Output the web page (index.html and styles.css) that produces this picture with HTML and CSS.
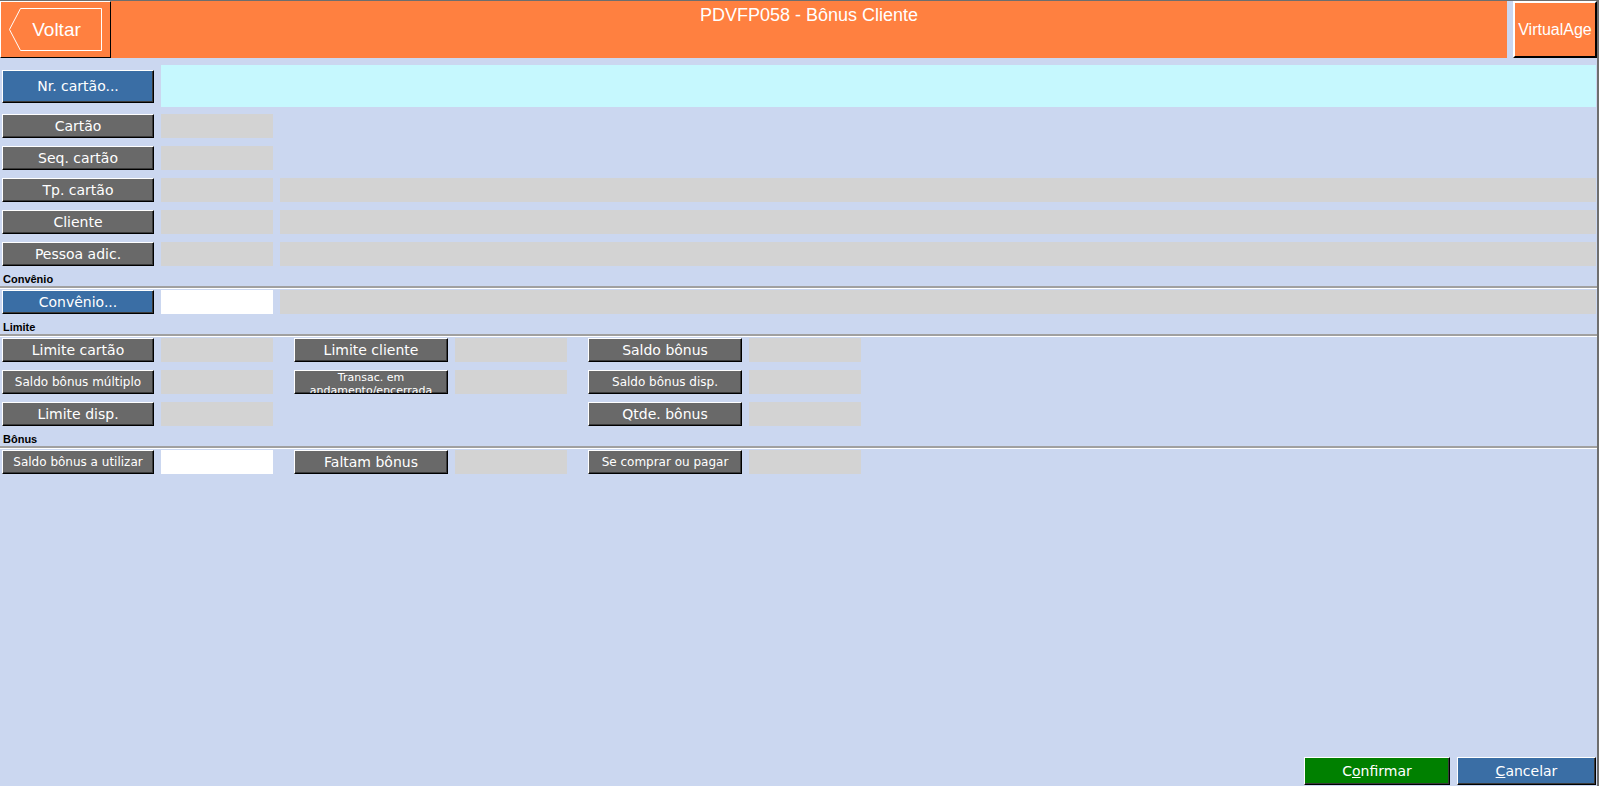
FILE: index.html
```html
<!DOCTYPE html>
<html lang="pt-BR">
  <head>
    <meta charset="UTF-8" />
    <meta name="viewport" content="width=device-width, initial-scale=1.0" />
    <title>PDVFP058 - Bônus Cliente</title>
    <link rel="stylesheet" href="styles.css">
  </head>
  <body>
    <div class="window">
      <header class="topbar">
        <button class="back-btn">
          <svg class="back-shape" width="110" height="57" viewBox="0 0 110 57">
            <polygon points="9.5,28.5 20.5,7.5 101.5,7.5 101.5,49.5 20.5,49.5" fill="none" stroke="#fff" stroke-width="1" />
          </svg>
          <span>Voltar</span>
        </button>
        <div class="title">PDVFP058 - Bônus Cliente</div>
        <button class="brand-btn">VirtualAge</button>
      </header>

      <main class="content">
        <div class="card-row">
          <button class="btn btn-blue btn-card">Nr. cartão...</button>
          <div class="field field-card"></div>
        </div>

        <div class="rows">
          <div class="row">
            <button class="btn btn-gray">Cartão</button>
            <div class="field"></div>
          </div>
          <div class="row">
            <button class="btn btn-gray">Seq. cartão</button>
            <div class="field"></div>
          </div>
          <div class="row">
            <button class="btn btn-gray">Tp. cartão</button>
            <div class="field"></div>
            <div class="field field-wide"></div>
          </div>
          <div class="row">
            <button class="btn btn-gray">Cliente</button>
            <div class="field"></div>
            <div class="field field-wide"></div>
          </div>
          <div class="row">
            <button class="btn btn-gray">Pessoa adic.</button>
            <div class="field"></div>
            <div class="field field-wide"></div>
          </div>
        </div>

        <div class="section-title">Convênio</div>
        <div class="rows">
          <div class="row">
            <button class="btn btn-blue">Convênio...</button>
            <div class="field field-input"></div>
            <div class="field field-wide"></div>
          </div>
        </div>

        <div class="section-title">Limite</div>
        <div class="rows">
          <div class="row">
            <div class="pair">
              <button class="btn btn-gray">Limite cartão</button>
              <div class="field"></div>
            </div>
            <div class="pair">
              <button class="btn btn-gray btn-mid">Limite cliente</button>
              <div class="field"></div>
            </div>
            <div class="pair">
              <button class="btn btn-gray btn-mid">Saldo bônus</button>
              <div class="field"></div>
            </div>
          </div>
          <div class="row">
            <div class="pair">
              <button class="btn btn-gray btn-small">Saldo bônus múltiplo</button>
              <div class="field"></div>
            </div>
            <div class="pair">
              <button class="btn btn-gray btn-mid btn-tiny">Transac. em andamento/encerrada</button>
              <div class="field"></div>
            </div>
            <div class="pair">
              <button class="btn btn-gray btn-mid btn-small">Saldo bônus disp.</button>
              <div class="field"></div>
            </div>
          </div>
          <div class="row">
            <div class="pair">
              <button class="btn btn-gray">Limite disp.</button>
              <div class="field"></div>
            </div>
            <div class="pair pair-empty"></div>
            <div class="pair">
              <button class="btn btn-gray btn-mid">Qtde. bônus</button>
              <div class="field"></div>
            </div>
          </div>
        </div>

        <div class="section-title">Bônus</div>
        <div class="rows">
          <div class="row">
            <div class="pair">
              <button class="btn btn-gray btn-small">Saldo bônus a utilizar</button>
              <div class="field field-input"></div>
            </div>
            <div class="pair">
              <button class="btn btn-gray btn-mid">Faltam bônus</button>
              <div class="field"></div>
            </div>
            <div class="pair">
              <button class="btn btn-gray btn-mid btn-small">Se comprar ou pagar</button>
              <div class="field"></div>
            </div>
          </div>
        </div>
      </main>

      <footer class="actions">
        <button class="btn btn-green btn-confirm">C<u>o</u>nfirmar</button>
        <button class="btn btn-blue btn-cancel"><u>C</u>ancelar</button>
      </footer>
    </div>
  </body>
</html>
```

FILE: styles.css
```css
body {
  margin: 0;
  background-color: #cbd7f0;
  font-family: "DejaVu Sans", Verdana, sans-serif;
}
.window {
  width: 1599px;
  height: 786px;
  box-sizing: border-box;
  border-top: 1px solid #6e6e6e;
  border-right: 2px solid #6e6e6e;
  display: flex;
  flex-direction: column;
}

/* header */
.topbar {
  display: flex;
  height: 57px;
  flex-shrink: 0;
}
.back-btn {
  position: relative;
  width: 111px;
  height: 57px;
  padding: 0;
  background-color: #ff8040;
  border: 1px solid;
  border-color: #fff #000 #000 #fff;
  color: #fff;
  font-family: "Liberation Sans", Arial, sans-serif;
  font-size: 19px;
  cursor: pointer;
}
.back-shape {
  position: absolute;
  left: -1px;
  top: -1px;
}
.back-btn span {
  position: relative;
  left: 1px;
}
.title {
  flex: 1;
  background-color: #ff8040;
  color: #fff;
  font-family: "Liberation Sans", Arial, sans-serif;
  font-size: 18px;
  text-align: center;
  padding-top: 4px;
  margin-right: 6px;
}
.brand-btn {
  width: 84px;
  height: 57px;
  padding: 0;
  background-color: #ff8040;
  border: 1px solid;
  border-color: #fff #000 #000 #fff;
  border-width: 2px 2px 2px 2px;
  color: #fff;
  font-family: "Liberation Sans", Arial, sans-serif;
  font-size: 16px;
}

/* form */
.content {
  flex: 1;
  padding: 0 1px 0 2px;
}
.btn {
  box-sizing: border-box;
  height: 24px;
  padding: 0;
  border: 1px solid;
  border-color: #fff #000 #000 #fff;
  box-shadow: inset -1px -1px #3a3a3a;
  color: #fff;
  font-family: "DejaVu Sans", Verdana, sans-serif;
  font-size: 14px;
  white-space: nowrap;
  overflow: hidden;
  cursor: pointer;
}
.btn-gray {
  background-color: #696969;
}
.btn-blue {
  background-color: #3a6ea5;
}
.btn-green {
  background-color: #008000;
}
.row .btn,
.pair .btn {
  width: 152px;
  flex-shrink: 0;
}
.row .btn-mid {
  width: 154px;
}
.btn-small {
  font-size: 12px;
}
.btn-tiny {
  font-size: 11px;
  line-height: 13px;
  white-space: normal;
  display: flex;
  align-items: flex-start;
  justify-content: center;
  padding: 0 4px;
}
.field {
  width: 112px;
  height: 24px;
  flex-shrink: 0;
  background-color: #d3d3d3;
}
.field-wide {
  flex: 1;
}
.field-input {
  background-color: #fff;
}

.card-row {
  display: flex;
  align-items: center;
  gap: 7px;
  margin-top: 7px;
  height: 42px;
}
.btn-card {
  width: 152px;
  height: 33px;
  flex-shrink: 0;
}
.field-card {
  flex: 1;
  height: 42px;
  background-color: #c6f8fe;
}

.rows {
  display: flex;
  flex-direction: column;
  gap: 8px;
}
.card-row + .rows {
  margin-top: 7px;
}
.row {
  display: flex;
  gap: 7px;
  height: 24px;
}
.row .pair + .pair {
  margin-left: 14px;
}
.pair {
  display: flex;
  gap: 7px;
}
.pair-empty {
  width: 273px;
}

.section-title {
  margin-top: 7px;
  margin-left: -2px;
  margin-right: -1px;
  padding-left: 3px;
  height: 13px;
  line-height: 13px;
  font-family: "Liberation Sans", Arial, sans-serif;
  font-size: 11px;
  font-weight: bold;
  color: #000;
  border-bottom: 2px solid #a0a0a0;
  box-shadow: 0 1px #fff;
  margin-bottom: 2px;
}

/* footer */
.actions {
  display: flex;
  justify-content: flex-end;
  gap: 7px;
  padding: 0 1px 1px 0;
}
.actions .btn {
  height: 28px;
}
.btn-confirm {
  width: 146px;
}
.btn-cancel {
  width: 139px;
}
```
